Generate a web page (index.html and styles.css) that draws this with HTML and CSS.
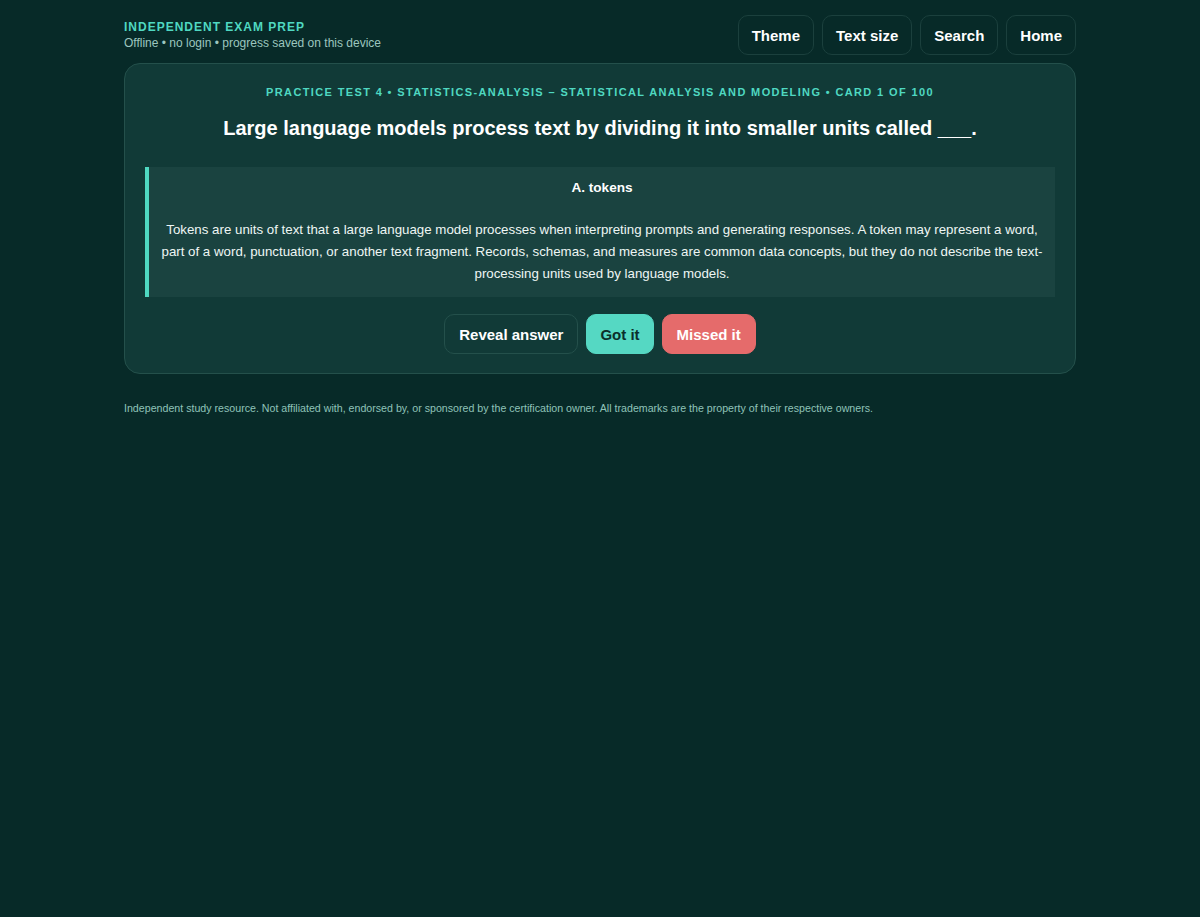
FILE: index.html
```html
<!DOCTYPE html>
<html lang="en">
<head>
    <meta charset="UTF-8">
    <meta name="viewport" content="width=device-width, initial-scale=1.0">
    <title>Independent Exam Prep</title>
    <link rel="stylesheet" href="styles.css">
</head>
<body>
    <div class="page">
        <header class="topbar">
            <div class="brand">
                <div class="brand-title">Independent Exam Prep</div>
                <div class="brand-sub">Offline • no login • progress saved on this device</div>
            </div>
            <nav class="tools">
                <button class="tool-btn">Theme</button>
                <button class="tool-btn">Text size</button>
                <button class="tool-btn">Search</button>
                <button class="tool-btn">Home</button>
            </nav>
        </header>

        <!-- Flashcard -->
        <main class="card">
            <div class="card-meta">Practice Test 4 • statistics-analysis – Statistical Analysis and Modeling • Card 1 of 100</div>
            <h1 class="question">Large language models process text by dividing it into smaller units called ___.</h1>

            <div class="answer">
                <div class="answer-title">A. tokens</div>
                <p class="answer-text">Tokens are units of text that a large language model processes when interpreting prompts and generating responses. A token may represent a word, part of a word, punctuation, or another text fragment. Records, schemas, and measures are common data concepts, but they do not describe the text-processing units used by language models.</p>
            </div>

            <div class="actions">
                <button class="btn btn-ghost">Reveal answer</button>
                <button class="btn btn-got">Got it</button>
                <button class="btn btn-missed">Missed it</button>
            </div>
        </main>

        <footer class="disclaimer">
            Independent study resource. Not affiliated with, endorsed by, or sponsored by the certification owner. All trademarks are the property of their respective owners.
        </footer>
    </div>
</body>
</html>
```

FILE: styles.css
```css
* {
    box-sizing: border-box;
    margin: 0;
    padding: 0;
}

body {
    font-family: "Liberation Sans", Arial, sans-serif;
    background-color: #072a28;
    color: #ffffff;
    min-height: 100vh;
}

.page {
    max-width: 952px;
    margin: 0 auto;
    padding-top: 15px;
}

.topbar {
    display: flex;
    justify-content: space-between;
    align-items: center;
    margin-bottom: 8px;
}

.brand-title {
    color: #4fd8c1;
    font-size: 12px;
    font-weight: bold;
    letter-spacing: 1px;
    text-transform: uppercase;
    line-height: 16px;
}

.brand-sub {
    color: #9cc6bf;
    font-size: 12px;
    line-height: 16px;
}

.tools {
    display: flex;
    gap: 8px;
}

.tool-btn {
    height: 40px;
    padding: 0 13px;
    background: #072a28;
    color: #ffffff;
    border: 1px solid #1b403d;
    border-radius: 10px;
    font-family: inherit;
    font-size: 15px;
    font-weight: bold;
    cursor: pointer;
}

.card {
    background: #113a37;
    border: 1px solid #24504b;
    border-radius: 16px;
    padding: 20px 20px 19px;
    text-align: center;
}

.card-meta {
    color: #4fd8c1;
    font-size: 11px;
    font-weight: bold;
    letter-spacing: 1.37px;
    text-transform: uppercase;
    line-height: 16px;
}

.question {
    margin-top: 15px;
    font-size: 20px;
    line-height: 26px;
    font-weight: bold;
    color: #ffffff;
}

.answer {
    margin-top: 26px;
    background: #1a4340;
    border-left: 4px solid #4fd8c1;
    padding: 11px 10px 12px;
}

.answer-title {
    font-size: 13.6px;
    font-weight: bold;
    line-height: 20px;
}

.answer-text {
    margin-top: 21px;
    font-size: 13.3px;
    line-height: 22px;
    color: #eef6f4;
}

.actions {
    display: flex;
    justify-content: center;
    gap: 8px;
    margin-top: 17px;
}

.btn {
    height: 40px;
    padding: 0 14px;
    border-radius: 10px;
    font-family: inherit;
    font-size: 15px;
    font-weight: bold;
    cursor: pointer;
}

.btn-ghost {
    background: #113a37;
    color: #ffffff;
    border: 1px solid #24504b;
}

.btn-got {
    padding: 0 13px;
    background: #55d8c3;
    color: #0b2e2b;
    border: 1px solid #55d8c3;
}

.btn-missed {
    background: #e56b6b;
    color: #ffffff;
    border: 1px solid #e56b6b;
}

.disclaimer {
    margin-top: 27px;
    font-size: 10.65px;
    line-height: 14px;
    color: #8fc3b9;
}
```
